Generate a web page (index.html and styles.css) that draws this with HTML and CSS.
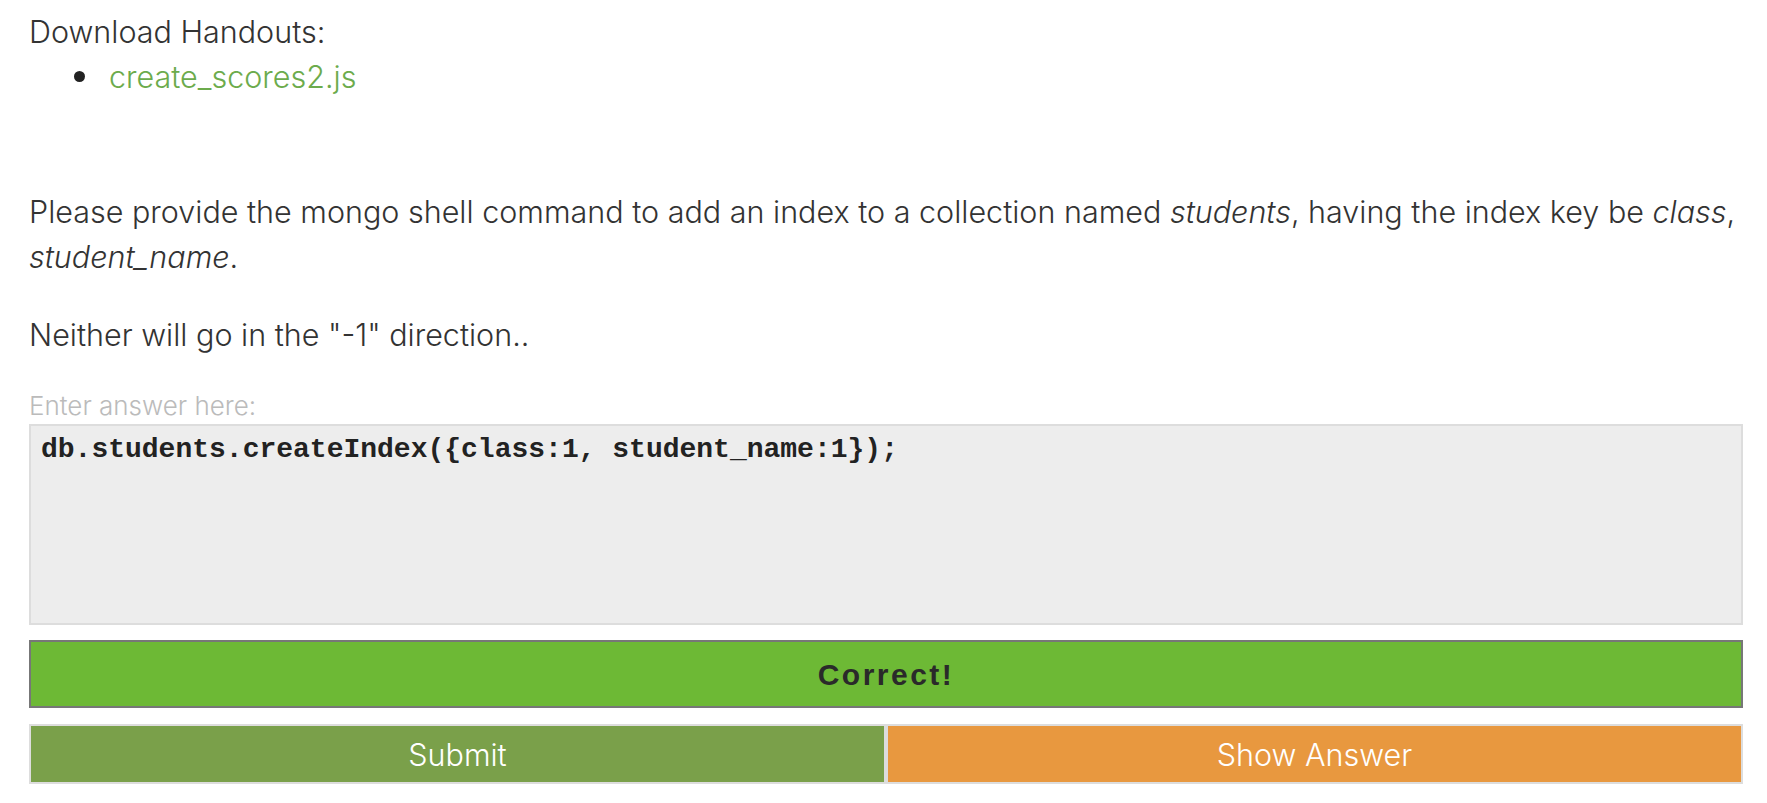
FILE: index.html
```html
<!DOCTYPE html>
<html>
<head>
<meta charset="utf-8">
<link rel="stylesheet" href="styles.css">
</head>
<body>
<div class="page">
  <div class="handouts">
    <div class="handouts-title">Download Handouts:</div>
    <ul class="handouts-list">
      <li class="handout-item"><a class="handout-link" href="#">create_scores2.js</a></li>
    </ul>
  </div>
  <p class="question">Please provide the mongo shell command to add an index to a collection named <em>students</em>, having the index key be <em>class</em>, <em>student_name</em>.</p>
  <p class="question note">Neither will go in the "-1" direction..</p>
  <label class="answer-label" for="answer">Enter answer here:</label>
  <textarea id="answer" class="answer" readonly>db.students.createIndex({class:1, student_name:1});</textarea>
  <div class="result">Correct!</div>
  <div class="actions">
    <button class="btn btn-submit">Submit</button>
    <button class="btn btn-show">Show Answer</button>
  </div>
</div>
</body>
</html>
```
FILE: styles.css
```css
html, body {
  margin: 0;
  padding: 0;
  background: #fff;
}
.page {
  padding: 9px 24px 0 29px;
  font-family: Inter, Roboto, "Liberation Sans", sans-serif;
  font-weight: 300;
  font-size: 30.5px;
  line-height: 45px;
  color: #333;
}
.handouts-title {
  margin: 0;
}
.handouts-list {
  margin: 0;
  padding-left: 45px;
  list-style: none;
}
.handout-item {
  display: flex;
  align-items: center;
}
.handout-item::before {
  content: "";
  flex: 0 0 auto;
  width: 11px;
  height: 11px;
  border-radius: 50%;
  background: #222;
  margin-right: 24px;
}
.handout-link {
  color: #6cab4c;
  text-decoration: none;
}
.question {
  margin: 90px 0 0 0;
}
.question em {
  font-style: italic;
}
.note {
  margin-top: 33px;
}
.answer-label {
  display: block;
  margin-top: 34px;
  font-size: 26px;
  line-height: 30px;
  color: #bbb;
}
.answer {
  display: block;
  box-sizing: border-box;
  width: 100%;
  height: 201px;
  margin: 3px 0 0 0;
  padding: 8px 10px;
  border: 2px solid #ddd;
  background: #ededed;
  color: #222;
  font-family: "Liberation Mono", "Courier New", monospace;
  font-weight: bold;
  font-size: 28px;
  line-height: 32px;
  resize: none;
  outline: none;
}
.result {
  box-sizing: border-box;
  height: 68px;
  margin-top: 15px;
  border: 2px solid #777;
  background: #6db935;
  color: #2a2a2a;
  font-family: "Liberation Sans", Arial, sans-serif;
  font-weight: bold;
  font-size: 30px;
  letter-spacing: 2.5px;
  display: flex;
  align-items: center;
  justify-content: center;
}
.actions {
  display: flex;
  margin-top: 16px;
}
.btn {
  flex: 1 1 0;
  box-sizing: border-box;
  height: 60px;
  border: 2px solid #ddd;
  margin: 0;
  padding: 0;
  color: #fff;
  font-family: Inter, Roboto, "Liberation Sans", sans-serif;
  font-weight: 300;
  font-size: 30.5px;
  cursor: pointer;
}
.btn-submit {
  background: #7aa04a;
}
.btn-show {
  background: #e8983f;
}
```
